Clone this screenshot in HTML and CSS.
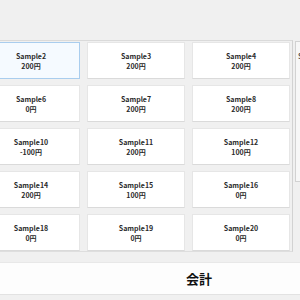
FILE: index.html
```html
<!DOCTYPE html>
<html lang="ja">
<head>
    <meta charset="UTF-8">
    <title>レジ</title>
    <link rel="stylesheet" href="styles.css">
</head>
<body>
    <div class="app">
        <div class="top"></div>
        <div class="main">
            <div class="list">
                <div class="item hover"><span>Sample2</span><span>200円</span></div>
                <div class="item"><span>Sample3</span><span>200円</span></div>
                <div class="item"><span>Sample4</span><span>200円</span></div>
                <div class="item"><span>Sample6</span><span>0円</span></div>
                <div class="item"><span>Sample7</span><span>200円</span></div>
                <div class="item"><span>Sample8</span><span>200円</span></div>
                <div class="item"><span>Sample10</span><span>-100円</span></div>
                <div class="item"><span>Sample11</span><span>200円</span></div>
                <div class="item"><span>Sample12</span><span>100円</span></div>
                <div class="item"><span>Sample14</span><span>200円</span></div>
                <div class="item"><span>Sample15</span><span>100円</span></div>
                <div class="item"><span>Sample16</span><span>0円</span></div>
                <div class="item"><span>Sample18</span><span>0円</span></div>
                <div class="item"><span>Sample19</span><span>0円</span></div>
                <div class="item"><span>Sample20</span><span>0円</span></div>
            </div>
            <div class="side">
                <div class="side-row">Sample2</div>
            </div>
        </div>
        <div class="pay">会計</div>
    </div>
</body>
</html>
```

FILE: styles.css
```css
body {
    margin: 0;
    width: 300px;
    height: 300px;
    overflow: hidden;
    background: #f0f0f0;
    font-family: "Noto Sans CJK JP", "Noto Sans", sans-serif;
    color: #2a2a2a;
}
.app {
    margin-left: -22px;
    width: 322px;
}
.top {
    height: 40px;
}
.main {
    display: flex;
    align-items: flex-start;
    height: 212px;
}
.list {
    flex-shrink: 0;
    display: grid;
    grid-template-columns: repeat(3, 98px);
    grid-auto-rows: 37px;
    column-gap: 7px;
    row-gap: 6px;
    padding: 1px 2px 0 4px;
    height: 209px;
    border-top: 1px solid #dadada;
    border-right: 1px solid #d2d2d2;
    border-bottom: 1px solid #dedede;
}
.item {
    display: flex;
    flex-direction: column;
    align-items: center;
    justify-content: center;
    box-sizing: border-box;
    background: #ffffff;
    border: 1px solid #e6e6e6;
    border-bottom-color: #dadada;
    font-size: 7px;
    font-weight: 700;
    line-height: 10px;
}
.item.hover {
    background: #f5faff;
    border-color: #a9cdee;
}
.side {
    flex-shrink: 0;
    margin-left: 2px;
    width: 40px;
    height: 139px;
    margin-top: 1px;
    background: #f7f7f7;
    border: 1px solid #d2d2d2;
    overflow: hidden;
}
.side-row {
    padding: 9px 2px;
    font-size: 7px;
    font-weight: 700;
    color: #555555;
    white-space: nowrap;
}
.pay {
    margin-top: 10px;
    height: 33px;
    padding-left: 120px;
    width: 322px;
    display: flex;
    align-items: center;
    justify-content: center;
    background: #fdfdfd;
    border-top: 1px solid #e8e8e8;
    border-bottom: 1px solid #e2e2e2;
    box-sizing: border-box;
    font-size: 13px;
    font-weight: 700;
    color: #111111;
}
```
